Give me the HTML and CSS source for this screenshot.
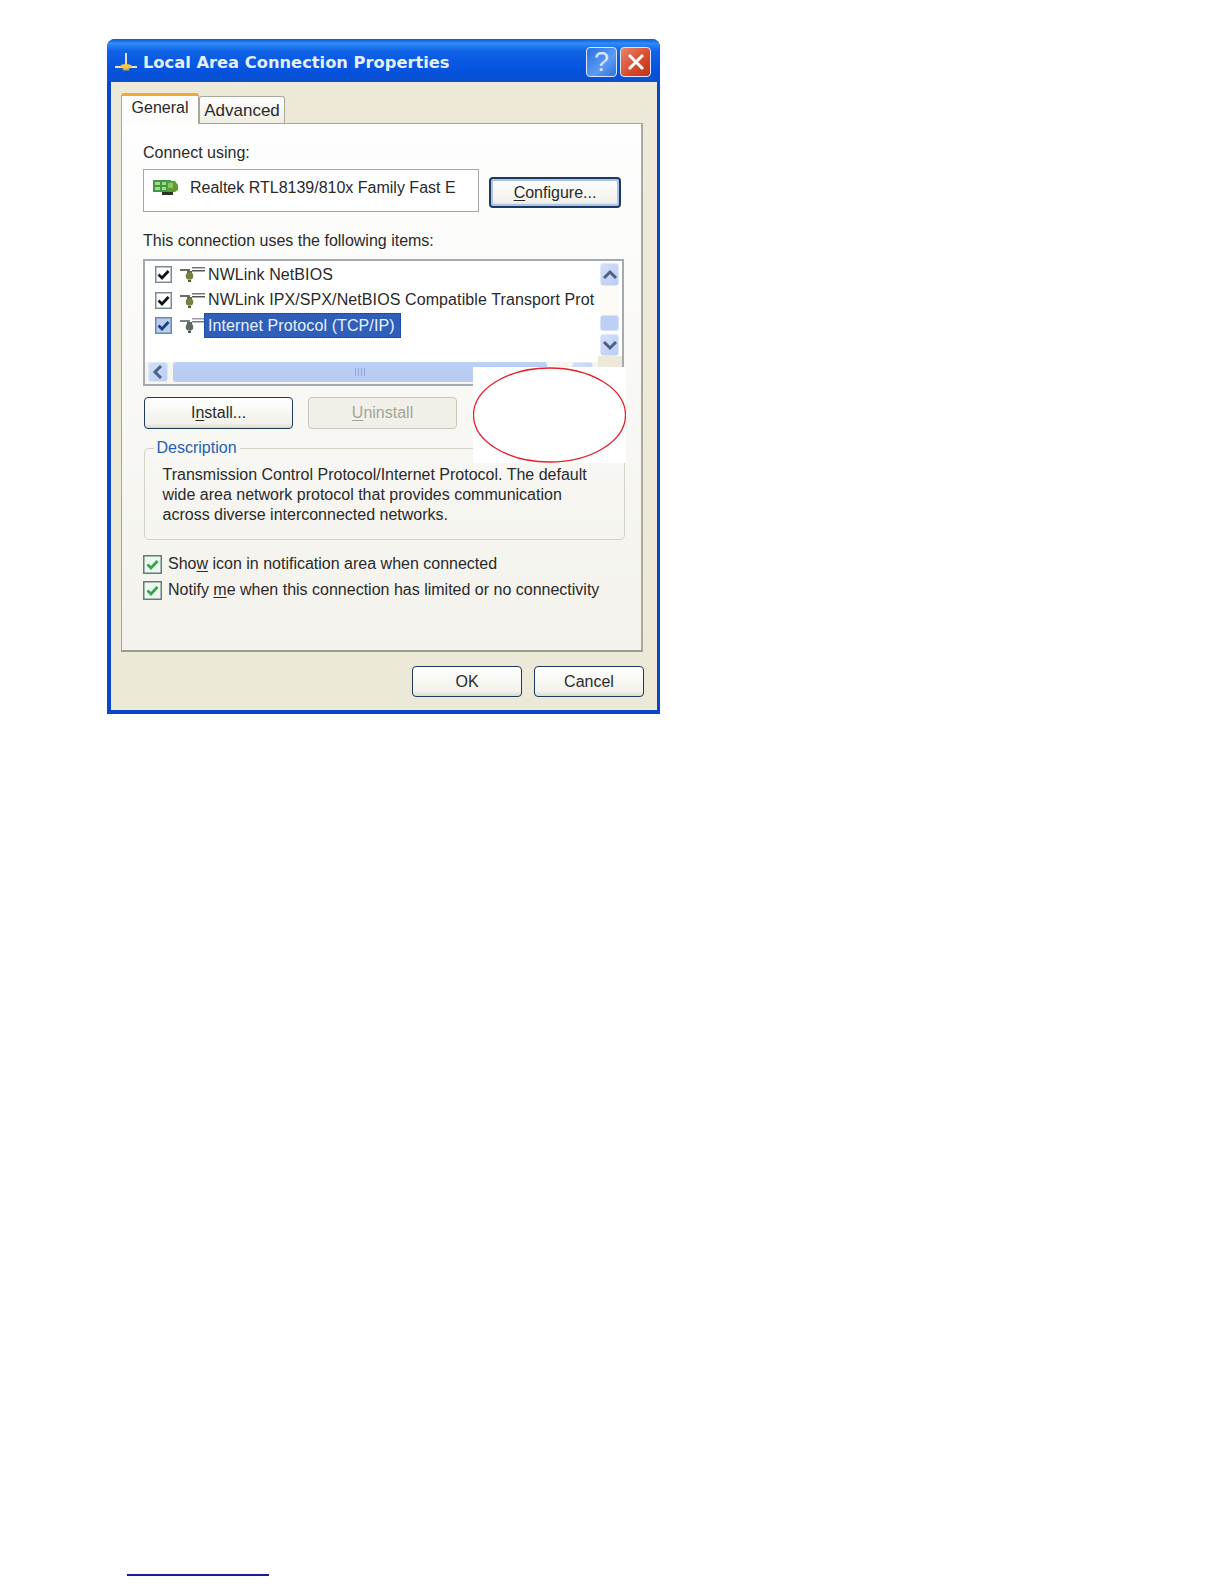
FILE: index.html
```html
<!DOCTYPE html>
<html lang="en">
<head>
<meta charset="utf-8">
<title>Local Area Connection Properties</title>
<link rel="stylesheet" href="styles.css">
</head>
<body>
<div class="window">
  <div class="titlebar">
    <svg class="title-icon" width="22" height="20" viewBox="0 0 22 20"><path d="M10 1h2v12h-2z" fill="#e6e0c8"/><path d="M0 14h22v2H0z" fill="#efe6b4"/><ellipse cx="11" cy="14.5" rx="6" ry="2.6" fill="#f4c93c"/><path d="M8 17h6v1.5H8z" fill="#d8a838"/></svg>
    <span class="title-text">Local Area Connection Properties</span>
    <div class="title-btn help">?</div>
    <div class="title-btn close"><svg width="20" height="20" viewBox="0 0 20 20"><path d="M3 3l14 14M17 3L3 17" stroke="#fff" stroke-width="3" fill="none"/></svg></div>
  </div>
  <div class="client">
    <div class="tabs">
      <div class="tab active">General</div>
      <div class="tab">Advanced</div>
    </div>
    <div class="panel">
      <p class="label connect-label">Connect using:</p>
      <div class="adapter-row">
        <div class="adapter-box">
          <svg class="card" viewBox="0 0 25 17"><path d="M0 1h18v12H0z" fill="#3f9a44"/><path d="M2 3h5v3H2zM2 8h5v3H2zM9 3h4v3H9zM9 8h4v3H9z" fill="#a8d888"/><path d="M14 2h8l3 4v5l-3 2h-8z" fill="#5f9c34"/><path d="M15 4h5v5h-5z" fill="#8fc45a"/><path d="M9 13h11v3H9z" fill="#2a3420"/></svg>
          <span>Realtek RTL8139/810x Family Fast E</span>
        </div>
        <div class="btn default configure"><span><u>C</u>onfigure...</span></div>
      </div>
      <p class="label items-label">This connection uses the following items:</p>
      <div class="list">
        <div class="rows">
          <div class="row">
            <svg class="check" viewBox="0 0 17 17"><rect x=".75" y=".75" width="15.5" height="15.5" fill="#fff" stroke="#7f8a92" stroke-width="1.5"/><path d="M3.5 8.5l3.5 3.5 6.5-7" fill="none" stroke="#111" stroke-width="2.8"/></svg>
            <svg class="net" viewBox="0 0 25 16"><path d="M0 3h10v2H0z" fill="#6b6b60"/><path d="M7 5h5v4H7z" fill="#60684a"/><circle cx="9.500" cy="10" r="3.800" fill="#75813c"/><path d="M8 14h3v2H8z" fill="#55583a"/><path d="M12 1h13v1.500H12z" fill="#777"/><path d="M12 4h13v1.500H12z" fill="#555"/></svg>
            <span class="item">NWLink NetBIOS</span>
          </div>
          <div class="row">
            <svg class="check" viewBox="0 0 17 17"><rect x=".75" y=".75" width="15.5" height="15.5" fill="#fff" stroke="#7f8a92" stroke-width="1.5"/><path d="M3.5 8.5l3.5 3.5 6.5-7" fill="none" stroke="#111" stroke-width="2.8"/></svg>
            <svg class="net" viewBox="0 0 25 16"><path d="M0 3h10v2H0z" fill="#6b6b60"/><path d="M7 5h5v4H7z" fill="#60684a"/><circle cx="9.500" cy="10" r="3.800" fill="#75813c"/><path d="M8 14h3v2H8z" fill="#55583a"/><path d="M12 1h13v1.500H12z" fill="#777"/><path d="M12 4h13v1.500H12z" fill="#555"/></svg>
            <span class="item">NWLink IPX/SPX/NetBIOS Compatible Transport Prot</span>
          </div>
          <div class="row">
            <svg class="check" viewBox="0 0 17 17"><rect x=".75" y=".75" width="15.5" height="15.5" fill="#b9cdec" stroke="#6b88b4" stroke-width="1.5"/><path d="M3.5 8.5l3.5 3.5 6.5-7" fill="none" stroke="#1c3f80" stroke-width="2.8"/></svg>
            <svg class="net" viewBox="0 0 25 16"><path d="M0 3h10v2H0z" fill="#7a8088"/><path d="M7 5h5v4H7z" fill="#5a6468"/><circle cx="9.500" cy="10" r="3.800" fill="#616a60"/><path d="M8 14h3v2H8z" fill="#555"/><path d="M12 1h13v1.500H12z" fill="#99a"/><path d="M12 4h13v1.500H12z" fill="#778"/></svg>
            <span class="item selected">Internet Protocol (TCP/IP)</span>
          </div>
        </div>
        <div class="vscroll">
          <div class="sb-btn up"><svg width="16" height="12" viewBox="0 0 16 12"><path d="M2 9l6-6 6 6" fill="none" stroke="#4d6185" stroke-width="3"/></svg></div>
          <div class="sb-track"></div>
          <div class="sb-thumb"></div>
          <div class="sb-btn down"><svg width="16" height="12" viewBox="0 0 16 12"><path d="M2 3l6 6 6-6" fill="none" stroke="#4d6185" stroke-width="3"/></svg></div>
        </div>
        <div class="hscroll">
          <div class="sb-btn left"><svg width="12" height="16" viewBox="0 0 12 16"><path d="M9 2L3 8l6 6" fill="none" stroke="#4d6185" stroke-width="3"/></svg></div>
          <div class="h-thumb"><span class="grip"></span></div>
          <div class="sb-btn right"></div>
        </div>
        <div class="corner"></div>
      </div>
      <div class="action-row">
        <div class="btn install"><span>I<u>n</u>stall...</span></div>
        <div class="btn disabled"><span><u>U</u>ninstall</span></div>
      </div>
      <div class="group">
        <span class="legend">Description</span>
        <p class="desc">Transmission Control Protocol/Internet Protocol. The default<br>wide area network protocol that provides communication<br>across diverse interconnected networks.</p>
      </div>
      <div class="opt first">
        <svg class="check green" viewBox="0 0 19 19"><rect x=".75" y=".75" width="17.5" height="17.5" fill="#eef7ee" stroke="#5d7f78" stroke-width="1.5"/><path d="M4.5 9.500l3.500 3.500 6.500-7" fill="none" stroke="#33a54a" stroke-width="2.800"/></svg>
        <span>Sho<u>w</u> icon in notification area when connected</span>
      </div>
      <div class="opt">
        <svg class="check green" viewBox="0 0 19 19"><rect x=".75" y=".75" width="17.5" height="17.5" fill="#eef7ee" stroke="#5d7f78" stroke-width="1.5"/><path d="M4.5 9.500l3.500 3.500 6.500-7" fill="none" stroke="#33a54a" stroke-width="2.800"/></svg>
        <span>Notify <u>m</u>e when this connection has limited or no connectivity</span>
      </div>
    </div>
    <div class="footer">
      <div class="btn"><span>OK</span></div>
      <div class="btn"><span>Cancel</span></div>
    </div>
  </div>
  <div class="callout"><svg width="153" height="96" viewBox="0 0 153 96"><ellipse cx="76.500" cy="48" rx="76" ry="47" fill="none" stroke="#e8202c" stroke-width="1.300"/></svg></div>
</div>
<div class="page-rule"></div>
</body>
</html>
```
FILE: styles.css
```css
* { box-sizing: border-box; }
html, body { margin: 0; padding: 0; background: #fff; }
body {
  height: 1584px;
  overflow: hidden;
  font-family: "Liberation Sans", Arial, sans-serif;
  font-size: 16px;
  color: #2a2a2a;
}
p { margin: 0; }
u { text-underline-offset: 2px; }

.window {
  position: relative;
  width: 553px;
  height: 675px;
  margin: 39px 0 0 107px;
  border-radius: 8px 8px 0 0;
  background: #0a46c8;
  display: flex;
  flex-direction: column;
}
.titlebar {
  height: 43px;
  flex: none;
  display: flex;
  align-items: center;
  padding: 3px 9px 0 8px;
  border-radius: 8px 8px 0 0;
  background: linear-gradient(#0a5ae0 0%, #2f8cf4 10%, #0f62e6 28%, #0553df 72%, #0a4fd0 100%);
}
.title-icon { flex: none; margin-right: 6px; }
.title-text {
  flex: 1;
  color: #e4efff;
  font-family: "DejaVu Sans", sans-serif;
  font-weight: 700;
  font-size: 16.3px;
  white-space: nowrap;
}
.title-btn {
  width: 31px;
  height: 30px;
  border: 1.5px solid #dce8fa;
  border-radius: 4px;
  display: flex;
  align-items: center;
  justify-content: center;
  margin-left: 3px;
  flex: none;
}
.help {
  background: linear-gradient(135deg, #2d6fe0, #5a9cf2 60%, #2f70dc);
  color: #d8e6ff;
  font-size: 27px;
}
.close { background: linear-gradient(135deg, #e8846a, #d8482a 60%, #b8341c); }

.client {
  flex: 1;
  margin: 0 3px 4px 4px;
  background: #ece9d8;
  padding: 11px 13px 0 10px;
  display: flex;
  flex-direction: column;
}
.tabs { display: flex; height: 30px; align-items: flex-end; position: relative; z-index: 1; }
.tab {
  height: 27px;
  width: 86px;
  border: 1px solid #a8a89c;
  border-bottom: 0;
  border-radius: 3px 3px 0 0;
  background: linear-gradient(#fff, #efeee4);
  font-size: 17px;
  text-align: center;
  line-height: 27px;
  white-space: nowrap;
}
.tab.active {
  height: 31px;
  width: 78px;
  margin-bottom: -1px;
  border-top: 3px solid #f0a838;
  background: #fcfcfa;
  font-size: 16px;
  line-height: 24px;
}
.panel {
  width: 522px;
  height: 529px;
  flex: none;
  border: 1px solid #a5a59a;
  border-right: 2px solid #aaa9a0;
  border-bottom: 2px solid #9c9b90;
  background: linear-gradient(#fefefe, #f3f2ec);
  padding: 0 0 0 21px;
}
.label { line-height: 20px; white-space: nowrap; }
.connect-label { margin-top: 19px; }

.adapter-row { display: flex; align-items: flex-end; margin-top: 6px; height: 43px; }
.adapter-box {
  width: 336px;
  height: 43px;
  border: 1px solid #a5a9a5;
  background: #fff;
  display: flex;
  align-items: center;
  gap: 12px;
  padding: 0 0 6px 9px;
  white-space: nowrap;
}
.card { width: 25px; height: 17px; flex: none; }

.btn {
  border: 1.5px solid #1e3a5c;
  border-radius: 4px;
  background: linear-gradient(#fff, #f2f1ea 85%, #dcd8cc);
  display: flex;
  align-items: center;
  justify-content: center;
  font-size: 16px;
  color: #2a2a2a;
  white-space: nowrap;
}
.configure {
  width: 132px;
  height: 31px;
  margin: 0 0 4px 10px;
  border-width: 2px;
  box-shadow: inset 0 0 0 2px #a9c4ee;
}
.items-label { margin-top: 19px; }

.list {
  width: 481px;
  height: 127px;
  margin-top: 8px;
  border: 2px solid #a4aab0;
  background: #fff;
  display: grid;
  grid-template-columns: 453px 24px;
  grid-template-rows: 101px 22px;
}
.rows { padding: 1px 0 0 10px; overflow: hidden; }
.row { display: flex; align-items: center; height: 25.5px; }
.check { width: 17px; height: 17px; flex: none; }
.net { width: 25px; height: 16px; flex: none; margin-left: 8px; margin-top: -1px; }
.item { white-space: nowrap; padding-left: 3px; letter-spacing: .1px; }
.selected {
  background: #2f5fb8;
  color: #e8f0ff;
  outline: 1px dotted #1b3a78;
  outline-offset: -1px;
  height: 25px;
  line-height: 25px;
  margin-left: -1px;
  padding: 0 6px 0 4px;
}
.vscroll {
  grid-row: 1;
  grid-column: 2;
  padding: 2px 3px 0 2px;
  display: flex;
  flex-direction: column;
  background: #fff;
}
.sb-btn {
  background: linear-gradient(135deg, #d4e0fa, #b8ccf4);
  border: 1px solid #dfe8fb;
  border-radius: 3px;
  display: flex;
  align-items: center;
  justify-content: center;
  flex: none;
}
.sb-btn.up { height: 23px; }
.sb-btn.down { height: 22px; margin-top: 3px; }
.sb-track { height: 29px; background: #fbfaf4; flex: none; }
.sb-thumb { height: 16px; background: #bccff5; border: 1px solid #d8e3fa; border-radius: 3px; flex: none; }
.hscroll {
  grid-row: 2;
  grid-column: 1;
  display: flex;
  align-items: stretch;
  padding: 0 0 2px 3px;
  background: #f7f6ee;
}
.sb-btn.left { width: 20px; }
.sb-btn.right { width: 21px; margin-left: 25px; }
.h-thumb {
  width: 374px;
  margin-left: 5px;
  background: linear-gradient(#bccff6, #b6caf3);
  border-radius: 3px;
  display: flex;
  align-items: center;
  justify-content: center;
}
.grip {
  width: 10px;
  height: 8px;
  background: repeating-linear-gradient(90deg, #8fa6d2 0 1px, transparent 1px 3px);
}
.corner { grid-row: 2; grid-column: 2; margin-top: -6px; background: #ece9d8; }

.action-row { display: flex; gap: 15px; margin: 11px 0 0 1px; }
.action-row .btn { width: 149px; height: 32px; }
.disabled {
  border: 1.5px solid #c8c7b8;
  background: #f1f0e8;
  color: #a5a498;
}
.group {
  position: relative;
  width: 481px;
  height: 92px;
  margin: 19px 0 0 1px;
  border: 1.5px solid #d4d2c6;
  border-radius: 5px;
  padding: 15.5px 0 0 17.5px;
}
.legend {
  position: absolute;
  top: -11.5px;
  left: 8.5px;
  padding: 0 3px;
  background: #f8f8f4;
  color: #1f5eb4;
  line-height: 20px;
}
.desc { line-height: 20px; white-space: nowrap; }

.opt { display: flex; align-items: center; gap: 6px; height: 26px; white-space: nowrap; }
.opt.first { margin-top: 11px; }
.check.green { width: 19px; height: 19px; }

.footer { display: flex; justify-content: flex-end; gap: 12px; margin-top: 14px; }
.footer .btn { width: 110px; height: 31px; }

.callout {
  position: absolute;
  left: 366px;
  top: 328px;
  width: 153px;
  height: 96px;
  background: #fff;
}
.callout svg { display: block; }

.page-rule {
  width: 142px;
  height: 2px;
  margin: 860px 0 0 127px;
  background: #1a1a9a;
}
```
